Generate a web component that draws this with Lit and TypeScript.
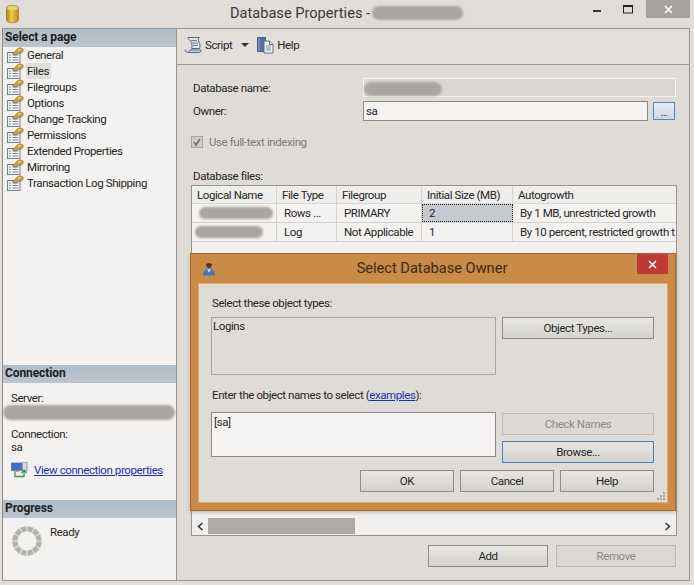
import { LitElement, html, css, svg } from "lit";
import { customElement } from "lit/decorators.js";

const pageIcon = html`<svg class="pi" viewBox="0 0 18 16" width="18" height="16">
  <rect x="1.5" y="5.500" width="12.500" height="10" fill="#f1f2f3" stroke="#7d8086"/>
  <path d="M3 8h2M3 10.500h2M3 13h2M6.500 8h6M6.500 10.500h6M6.500 13h6" stroke="#7e8fa8"/>
  <path d="M6.500 7 L10 3.500 L13 1 L15.500 1 L17.500 3 L16 5.500 L12.500 6.500 L9 8 Z" fill="#d4a63a" stroke="#7b6228" stroke-width=".7"/>
  <path d="M11.500 3.500 L15 2.200" stroke="#f4e3a0"/>
</svg>`;

const pages = ["General", "Files", "Filegroups", "Options", "Change Tracking", "Permissions", "Extended Properties", "Mirroring", "Transaction Log Shipping"];

const spinner = [...Array(12).keys()].map((i) => {
  const a = i * 30 + 15;
  return svg`<path d="M-3.300 -14.600 L3.300 -14.600 L2.200 -9.400 L-2.200 -9.400 Z" fill="#b2b2ae" transform="rotate(${a})"/>`;
});

@customElement("app-root")
export class AppRoot extends LitElement {
  static styles = css`
    :host { display: block; width: 694px; height: 585px; overflow: hidden; background: #e2dfdb; color: #262626;
      font: 11.5px/14px Roboto, "Liberation Sans", sans-serif; letter-spacing: -.41px; }
    * { box-sizing: border-box; }
    .win { display: flex; flex-direction: column; width: 694px; height: 585px; }
    .title { height: 28px; flex: none; display: flex; align-items: center; position: relative; padding-left: 6px; background: #e0ddd8; }
    .title-mid { position: absolute; left: 230px; top: 3px; display: flex; align-items: center; gap: 2px; font: 14.6px/20px Roboto, sans-serif; letter-spacing: 0; color: #3a3a3a; }
    .caps { margin-left: auto; display: flex; align-items: flex-start; align-self: flex-start; margin-right: 4px; }
    .cap { width: 30px; height: 18px; display: flex; justify-content: center; align-items: center; }
    .cap.x { width: 44px; background: #a7a29e; color: #fff; margin-left: 3px; }
    .body { flex: none; height: 553px; display: flex; margin: 0 4px 0 2px; border-top: 1px solid #98958f; border-bottom: 1px solid #98958f; }
    .side { width: 175px; flex: none; background: #f3f2f0; border-left: 1px solid #8f8c88; border-right: 1px solid #96938f; display: flex; flex-direction: column; }
    .sh { height: 18px; flex: none; background: linear-gradient(#b0bcc8, #bcc6d0); font: bold 12px/17px Roboto, sans-serif; padding-left: 2px; letter-spacing: -.1px; color: #1d1d1d; }
    .list { height: 318px; flex: none; display: flex; flex-direction: column; }
    .it { height: 16px; display: flex; align-items: center; padding-left: 3px; gap: 2px; }
    .it span { padding: 0 2px 0 1px; line-height: 16px; }
    .it.sel span { background: #dfdedc; }
    .pi { flex: none; }
    .conn { height: 117px; flex: none; padding: 8px 0 0 8px; display: flex; flex-direction: column; position: relative; }
    .c2 { margin-top: 22px; }
    .sa { margin-top: -1px; }
    .link { color: #1c2fb0; text-decoration: underline; }
    .viewrow { display: flex; align-items: center; gap: 6px; margin-top: 8px; }
    .prog { display: flex; gap: 7px; padding: 7px 0 0 8px; }
    .main { flex: 1; display: flex; flex-direction: column; min-width: 0; position: relative; border-right: 1px solid #9a9793; }
    .tb { height: 36px; flex: none; display: flex; align-items: center; padding: 0 0 4px 7px; border-bottom: 1px solid #9d9a96; }
    .tbi { display: flex; align-items: center; gap: 3px; }
    .arrow { width: 0; height: 0; border: 4px solid transparent; border-top-color: #333; border-bottom: 0; margin: 0 8px 0 9px; }
    .content { flex: 1; padding: 13px 13px 0 14px; display: flex; flex-direction: column; background: #dfdcd8; position: relative; }
    .fr { display: grid; grid-template-columns: 170px 1fr; align-items: center; padding-left: 2px; }
    .fr.o { margin-top: 4px; }
    .ro { height: 19px; border: 1px solid #f3f2f0; background: #dad7d3; display: flex; align-items: center; }
    .ownr { display: flex; gap: 5px; height: 20px; }
    .inp { flex: 1; height: 20px; border: 1px solid #8d8a86; background: #f4f3f1; padding: 2px 2px; }
    .dots { width: 22px; height: 18px; margin-top: 1px; margin-right: 1px; border: 1px solid #4f88bd; background: linear-gradient(#e8edf2,#cfd6dd); text-align: center; line-height: 19px; font-size: 10px; }
    .chk { display: flex; align-items: center; gap: 6px; margin-top: 15px; color: #7d7b78; height: 12px; }
    .box { width: 12px; height: 12px; border: 1px solid #a5a39f; background: #cfcdc9; display: flex; }
    .dbf { margin: 21px 0 2px 2px; height: 14px; }
    .grid { height: 351px; flex: none; border: 1px solid #96938f; background: #f3f2f0; display: flex; flex-direction: column; width: 486px; }
    .rows { flex: 1; overflow: hidden; }
    .row { display: grid; grid-template-columns: 85px 60px 85px 91px 163px; height: 19px; border-bottom: 1px solid #d2d1ce; }
    .row.head { height: 18px; background: #ededeb; border-bottom: 1px solid #d6d5d2; }
    .cell { display: flex; align-items: center; padding-left: 7px; border-right: 1px solid #d4d3d0; white-space: nowrap; overflow: hidden; }
    .row.head .cell { padding-left: 5px; }
    .row .cell.f { background: #c6c9cf; outline: 1px dotted #222; outline-offset: -1px; }
    .cell:last-child { border-right: 0; }
    .sb { height: 17px; flex: none; background: #f0efed; display: flex; align-items: center; justify-content: space-between; padding: 0 5px; position: relative; }
    .thumb { position: absolute; left: 16px; top: 0; width: 147px; height: 16px; background: #aeaba7; }
    .foot { display: flex; justify-content: flex-end; gap: 8px; margin-top: 9px; }
    .btn { border: 1px solid #8e8c88; background: linear-gradient(#e8e6e3, #d4d2cf); display: flex; align-items: center; justify-content: center; height: 22px; }
    .btn.dis { border-color: #bcbab6; color: #8b8986; background: #dcd9d5; }
    .btn.foc { border-color: #4a80b6; }
    .w120 { width: 120px; }
    .blot { background: #aaa5a1; border-radius: 8px; filter: blur(1px); flex: none; }
    .bt { width: 91px; height: 14px; }
    .bd { width: 78px; height: 14px; margin-top: 3px; }
    .bs { position: absolute; left: 0; top: 22px; width: 172px; height: 15px; }
    .b1 { width: 74px; height: 12px; }
    .b2 { width: 68px; height: 12px; }
    .c3 { padding-left: 3px; }
    .dlg { position: absolute; left: 13px; top: 188px; width: 486px; height: 258px; background: #c98b45; border: 1px solid #a66c2f; box-shadow: 0 2px 4px rgba(0,0,0,.2); display: flex; flex-direction: column; }
    .dt { height: 29px; flex: none; position: relative; display: flex; align-items: center; padding-left: 11px; }
    .dtt { position: absolute; left: 0; right: 0; top: 4px; text-align: center; font: 14.6px/20px Roboto, sans-serif; letter-spacing: 0; color: #3a2a18; padding-right: 2px; }
    .dx { position: absolute; right: 7px; top: 0; width: 31px; height: 20px; background: #bd3a36; color: #fff; display: flex; align-items: center; justify-content: center; }
    .dc { flex: 1; margin: 0 7px 7px; background: #dfdcd8; border: 1px solid #e4a868; padding: 12px 13px 0 12px; display: flex; flex-direction: column; position: relative; }
    .dr { display: grid; grid-template-columns: 285px 152px; column-gap: 6px; }
    .m7 { margin-top: 7px; }
    .m10 { margin-top: 10px; }
    .m13 { margin-top: 13px; }
    .lb { height: 58px; border: 1px solid #a8a5a1; padding: 1px 1px; background: #dfdcd8; }
    .ta { height: 45px; border: 1px solid #8c8986; background: #f4f3f1; padding: 2px 2px; }
    .stack { display: flex; flex-direction: column; gap: 6px; margin-top: 1px; }
    .ok { display: flex; justify-content: flex-end; gap: 6px; margin: 7px 0 0; }
    .w94 { width: 94px; }
    .lab { height: 14px; margin-left: 1px; }
    .grip { position: absolute; right: 2px; bottom: 2px; }
  `;

  render() {
    return html`<div class="win">
      <div class="title">
        <svg width="13" height="18" viewBox="0 0 13 18">
          <defs><linearGradient id="g" x1="0" x2="1"><stop offset="0" stop-color="#a8801f"/><stop offset=".4" stop-color="#f1c94a"/><stop offset="1" stop-color="#b98f24"/></linearGradient></defs>
          <path d="M.5 3c0-3.5 12-3.5 12 0v12c0 3.5-12 3.5-12 0z" fill="url(#g)" stroke="#8d6f20" stroke-width=".6"/>
          <ellipse cx="6.5" cy="3" rx="5.5" ry="2" fill="#e8d27a"/>
        </svg>
        <div class="title-mid">Database Properties - <div class="blot bt"></div></div>
        <div class="caps">
          <div class="cap"><svg width="10" height="10"><rect y="6" width="8" height="2" fill="#333"/></svg></div>
          <div class="cap"><svg width="11" height="9"><rect x=".5" y="1" width="9" height="7" fill="none" stroke="#222"/><rect x="0" y="0" width="10" height="2" fill="#222"/></svg></div>
          <div class="cap x"><svg width="9" height="9"><path d="M1 1l7 7M8 1l-7 7" stroke="#fff" stroke-width="1.6"/></svg></div>
        </div>
      </div>
      <div class="body">
        <div class="side">
          <div class="sh">Select a page</div>
          <div class="list">
            ${pages.map((p) => html`<div class="it ${p === "Files" ? "sel" : ""}">${pageIcon}<span>${p}</span></div>`)}
          </div>
          <div class="sh">Connection</div>
          <div class="conn">
            <div>Server:</div>
            <div class="blot bs"></div>
            <div class="c2">Connection:</div>
            <div class="sa">sa</div>
            <div class="viewrow">
              <svg width="17" height="16" viewBox="0 0 17 16"><rect x=".5" y="1" width="10" height="7.5" fill="#3f6fc4" stroke="#4d6288" stroke-width=".7"/><rect x="3" y="8.5" width="5" height="1.5" fill="#9aa3b0"/><rect x="11.5" y="0" width="4.5" height="9" fill="#d3d9e0" stroke="#6b7586" stroke-width=".7"/><path d="M4 10v4.500h9V9M10.500 11l2.500-3 2.500 3" fill="none" stroke="#3d9a3a" stroke-width="1.3"/></svg>
              <span class="link">View connection properties</span>
            </div>
          </div>
          <div class="sh">Progress</div>
          <div class="prog">
            <svg width="32" height="32" viewBox="-16 -16 32 32">${spinner}</svg>
            <div>Ready</div>
          </div>
        </div>
        <div class="main">
          <div class="tb">
            <div class="tbi">
              <svg width="18" height="18" viewBox="0 0 18 18"><path d="M4 1.500h11.500c-1.500 1-1.500 2.500-.5 4.500s1.500 4.500.5 6.500H7.500c1-2 .5-4.500-.5-6.500S3.500 3 4 1.500z" fill="#dfe4ea" stroke="#55688a"/><path d="M7 4.500h6M8 7h6M9 9.500h5" stroke="#6d7d94"/><path d="M1 13.500c0 2 1.500 3 3.500 3H15c1.500 0 2-1 2-2.500H6c0 1-1 1.500-2 1.500" fill="#cfd6df" stroke="#55688a"/></svg>
              <span>Script</span>
            </div>
            <div class="arrow"></div>
            <div class="tbi">
              <svg width="17" height="18" viewBox="0 0 17 18"><path d="M.5 1.500h8v14h-8z" fill="#54709f" stroke="#37507c" stroke-width=".8"/><path d="M2 2v13" stroke="#8ba3c7"/><path d="M7 5h5.500L16 8.500V17H7z" fill="#f2f3f5" stroke="#5f6f88"/><path d="M12.500 5v3.500H16" fill="#d4d9e0" stroke="#5f6f88"/><path d="M9 10h5M9 12h5M9 14h5" stroke="#7f8ca0"/></svg>
              <span>Help</span>
            </div>
          </div>
          <div class="content">
            <div class="fr"><span>Database name:</span><div class="ro"><div class="blot bd"></div></div></div>
            <div class="fr o"><span>Owner:</span><div class="ownr"><div class="inp">sa</div><div class="dots">...</div></div></div>
            <div class="chk">
              <div class="box"><svg width="10" height="10" viewBox="0 0 10 10"><path d="M2 5l2 3 4-6" fill="none" stroke="#6f6f6f" stroke-width="1.6"/></svg></div>
              <span>Use full-text indexing</span>
            </div>
            <div class="dbf">Database files:</div>
            <div class="grid">
              <div class="rows">
                <div class="row head">
                  <div class="cell">Logical Name</div><div class="cell">File Type</div><div class="cell">Filegroup</div><div class="cell">Initial Size (MB)</div><div class="cell">Autogrowth</div>
                </div>
                <div class="row">
                  <div class="cell"><div class="blot b1"></div></div><div class="cell">Rows ...</div><div class="cell">PRIMARY</div><div class="cell f">2</div><div class="cell">By 1 MB, unrestricted growth</div>
                </div>
                <div class="row">
                  <div class="cell c3"><div class="blot b2"></div></div><div class="cell">Log</div><div class="cell">Not Applicable</div><div class="cell">1</div><div class="cell">By 10 percent, restricted growth t</div>
                </div>
              </div>
              <div class="sb">
                <svg width="7" height="9"><path d="M5.500 1L1.500 4.500l4 3.500" fill="none" stroke="#333" stroke-width="1.5"/></svg>
                <div class="thumb"></div>
                <svg width="7" height="9"><path d="M1.500 1l4 3.500-4 3.500" fill="none" stroke="#333" stroke-width="1.5"/></svg>
              </div>
            </div>
            <div class="foot">
              <div class="btn w120">Add</div>
              <div class="btn w120 dis">Remove</div>
            </div>
            <div class="dlg">
              <div class="dt">
                <svg width="14" height="14" viewBox="0 0 14 14"><circle cx="7" cy="3.500" r="2.600" fill="#5b3d2c"/><path d="M4 2.500h6" stroke="#2c3550" stroke-width="1.3"/><path d="M1 13.500c0-4 2.500-7 6-7s6 3 6 7z" fill="#3f78c0"/><path d="M5 7.500l2 3 2-3" fill="#dfe9f5"/></svg>
                <div class="dtt">Select Database Owner</div>
                <div class="dx"><svg width="9" height="9"><path d="M1 1l7 7M8 1l-7 7" stroke="#fff" stroke-width="1.5"/></svg></div>
              </div>
              <div class="dc">
                <div class="lab">Select these object types:</div>
                <div class="dr m7">
                  <div class="lb">Logins</div>
                  <div><div class="btn">Object Types...</div></div>
                </div>
                <div class="lab m13">Enter the object names to select (<span class="link">examples</span>):</div>
                <div class="dr m10">
                  <div class="ta">[sa]</div>
                  <div class="stack"><div class="btn dis">Check Names</div><div class="btn foc">Browse...</div></div>
                </div>
                <div class="ok">
                  <div class="btn w94">OK</div><div class="btn w94">Cancel</div><div class="btn w94">Help</div>
                </div>
                <svg class="grip" width="8" height="8" viewBox="0 0 8 8" fill="#a5a29e"><rect x="6" y="0" width="2" height="2"/><rect x="3" y="3" width="2" height="2"/><rect x="6" y="3" width="2" height="2"/><rect x="0" y="6" width="2" height="2"/><rect x="3" y="6" width="2" height="2"/><rect x="6" y="6" width="2" height="2"/></svg>
              </div>
            </div>
          </div>
        </div>
      </div>
    </div>`;
  }
}
